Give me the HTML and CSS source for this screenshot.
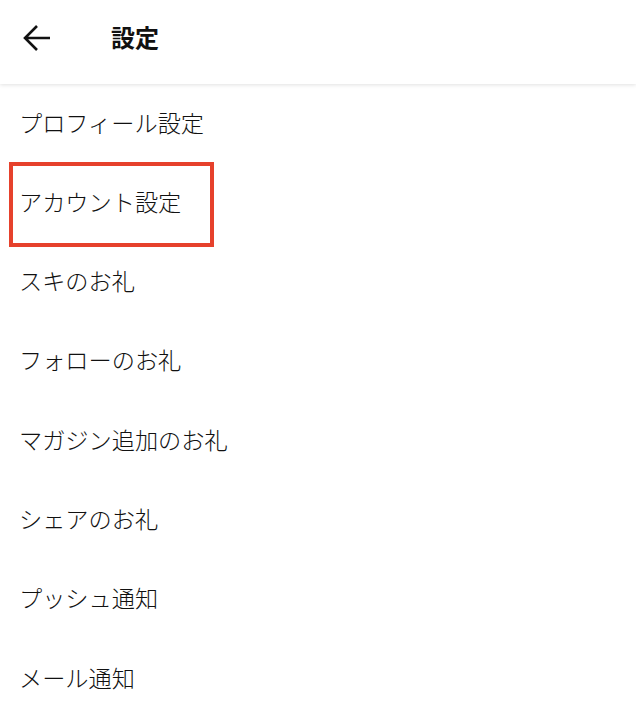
FILE: index.html
```html
<!DOCTYPE html>
<html lang="ja">
  <head>
    <meta charset="UTF-8" />
    <meta name="viewport" content="width=device-width, initial-scale=1.0" />
    <title>設定</title>
    <link rel="stylesheet" href="styles.css">
  </head>
  <body>
    <header class="header">
      <button class="back" aria-label="戻る">
        <svg width="28" height="28" viewBox="0 0 28 28">
          <path d="M27 14H2.5M14 2L2 14l12 12" fill="none" stroke="#111" stroke-width="2.6" />
        </svg>
      </button>
      <h1 class="title">設定</h1>
    </header>

    <ul class="menu">
      <li class="item">プロフィール設定</li>
      <li class="item">
        アカウント設定
        <span class="highlight"></span>
      </li>
      <li class="item">スキのお礼</li>
      <li class="item">フォローのお礼</li>
      <li class="item">マガジン追加のお礼</li>
      <li class="item">シェアのお礼</li>
      <li class="item">プッシュ通知</li>
      <li class="item">メール通知</li>
    </ul>
  </body>
</html>
```

FILE: styles.css
```css
* {
  margin: 0;
  padding: 0;
  box-sizing: border-box;
  font-family: "Noto Sans CJK JP", "Noto Sans", sans-serif;
}

body {
  background: #fff;
  color: #111;
  overflow: hidden;
}

.header {
  display: flex;
  align-items: center;
  height: 84px;
  padding-left: 23px;
  box-shadow: 0 1px 4px rgba(0, 0, 0, 0.12);
  position: relative;
  z-index: 1;
}

.back {
  display: flex;
  border: none;
  background: none;
  width: 28px;
  height: 28px;
  margin-top: -8px;
}

.title {
  margin-left: 60px;
  margin-top: -12px;
  font-size: 24px;
  font-weight: 600;
  color: #111;
}

.menu {
  list-style: none;
}

.item {
  position: relative;
  display: flex;
  align-items: center;
  height: 79.3px;
  padding-left: 19px;
  padding-bottom: 3px;
  font-size: 23.2px;
  font-weight: 300;
  line-height: 1;
}

.highlight {
  position: absolute;
  left: 9px;
  top: -1px;
  width: 205px;
  height: 85px;
  border: 4.5px solid #e6412c;
}
```
